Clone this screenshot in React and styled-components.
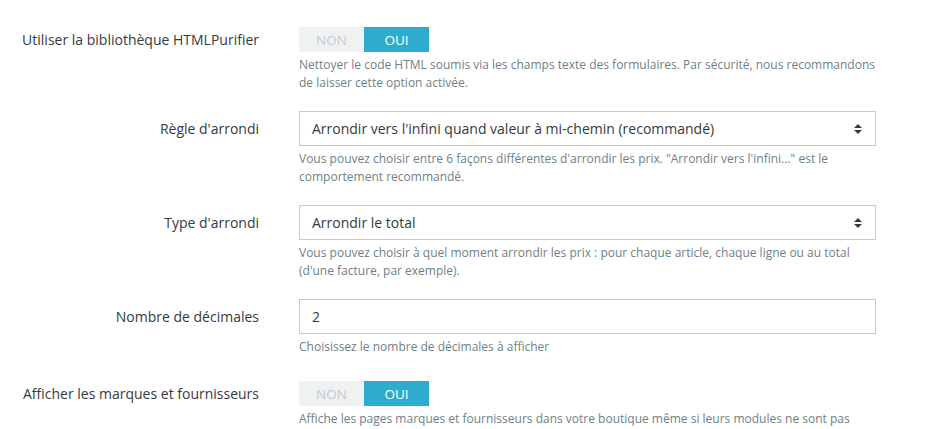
import React from "react";
import styled, { createGlobalStyle } from "styled-components";

const GlobalStyle = createGlobalStyle`
    body {
        margin: 0;
        background: #fff;
        font-family: "Open Sans", "Liberation Sans", sans-serif;
    }
`

const Form = styled.div`
    padding-top: 21px;
`

const Group = styled.div`
    display: grid;
    grid-template-columns: 259px 577px;
    column-gap: 40px;
    margin-bottom: 19px;
`

const Label = styled.div`
    text-align: right;
    font-size: 14px;
    color: #363a41;
    line-height: ${props => props.h}px;
    margin-top: ${props => props.top || 0}px;
    white-space: nowrap;
`

const Control = styled.div`
    display: flex;
    flex-direction: column;
`

const Switch = styled.div`
    display: flex;
    width: 130px;
    height: 25px;
    margin-top: 6px;
`

const SwitchSide = styled.span`
    flex: 1;
    display: flex;
    align-items: center;
    justify-content: center;
    font-size: 13.5px;
    text-transform: uppercase;
    background: ${props => props.on ? "#2eacce" : "#eff1f2"};
    color: ${props => props.on ? "#fff" : "#c6cbce"};
`

const SelectBox = styled.div`
    position: relative;
    box-sizing: border-box;
    height: 35px;
    border: 1px solid #bbcdd2;
    display: flex;
    align-items: center;
    padding: 0 12px;
    font-size: 14px;
    color: #363a41;
`

const Caret = styled.svg`
    position: absolute;
    right: 13px;
    top: 50%;
    margin-top: -5px;
`

const Help = styled.div`
    margin-top: 4px;
    margin-right: -4px;
    font-size: 12px;
    line-height: 18px;
    color: #6f7f86;
`

const Toggle = () => (
    <Switch>
        <SwitchSide>Non</SwitchSide>
        <SwitchSide on>Oui</SwitchSide>
    </Switch>
)

const Select = ({value}) => (
    <SelectBox>
        {value}
        <Caret width="8" height="10" viewBox="0 0 8 10">
            <path d="M4 0L8 4H0Z" fill="#363a41"/>
            <path d="M0 6H8L4 10Z" fill="#363a41"/>
        </Caret>
    </SelectBox>
)

const rows = [
    {
        label: "Utiliser la bibliothèque HTMLPurifier",
        type: "toggle",
        help: "Nettoyer le code HTML soumis via les champs texte des formulaires. Par sécurité, nous recommandons de laisser cette option activée."
    },
    {
        label: "Règle d'arrondi",
        type: "select",
        value: "Arrondir vers l'infini quand valeur à mi-chemin (recommandé)",
        help: "Vous pouvez choisir entre 6 façons différentes d'arrondir les prix. \"Arrondir vers l'infini...\" est le comportement recommandé."
    },
    {
        label: "Type d'arrondi",
        type: "select",
        value: "Arrondir le total",
        help: "Vous pouvez choisir à quel moment arrondir les prix : pour chaque article, chaque ligne ou au total (d'une facture, par exemple)."
    },
    {
        label: "Nombre de décimales",
        type: "input",
        value: "2",
        help: "Choisissez le nombre de décimales à afficher"
    },
    {
        label: "Afficher les marques et fournisseurs",
        type: "toggle",
        help: "Affiche les pages marques et fournisseurs dans votre boutique même si leurs modules ne sont pas activés."
    }
]

export default function App() {
    return (
        <>
            <GlobalStyle/>
            <Form>
                {rows.map((r, i) => (
                    <Group key={i}>
                        {r.type === "toggle"
                            ? <Label h={25} top={6}>{r.label}</Label>
                            : <Label h={35}>{r.label}</Label>}
                        <Control>
                            {r.type === "toggle" && <Toggle/>}
                            {r.type === "select" && <Select value={r.value}/>}
                            {r.type === "input" && <SelectBox>{r.value}</SelectBox>}
                            <Help>{r.help}</Help>
                        </Control>
                    </Group>
                ))}
            </Form>
        </>
    );
}
